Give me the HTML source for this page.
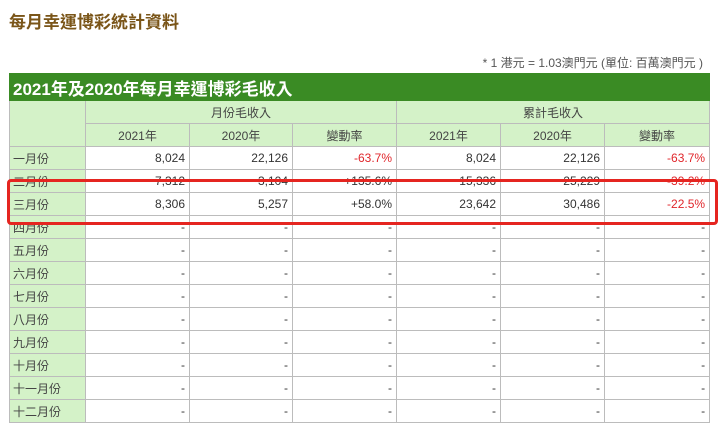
<!DOCTYPE html>
<html><head><meta charset="utf-8"><style>
body{margin:0;width:726px;height:435px;background:#fff;position:relative;overflow:hidden;font-family:"Liberation Sans","Noto Sans CJK TC",sans-serif;}
.t{position:absolute;left:9px;top:8px;font-size:17px;font-weight:bold;color:#7a5518;}
.note{position:absolute;right:23px;top:54px;font-size:12px;color:#555;}
table{position:absolute;left:9px;top:73px;border-collapse:collapse;table-layout:fixed;width:700px;font-size:12px;color:#333;}
td{border:1px solid #bcbcbc;height:22px;padding:0 4px;text-align:right;background:#fff;}
tr.cap td{background:#3a8b24;color:#fff;font-weight:bold;font-size:17px;text-align:left;height:26px;border-color:#3a8b24;padding:0 3px;}
td.h{background:#d4f2c8;text-align:center;color:#444;}
td.l{background:#d4f2c8;text-align:left;padding-left:3px;color:#444;}
.r{color:#e0262b;}
.box{position:absolute;left:7px;top:179px;width:705px;height:40px;border:3px solid #e52520;border-radius:4px;}
</style></head><body>
<div class="t">每月幸運博彩統計資料</div>
<div class="note">* 1 港元 = 1.03澳門元 (單位: 百萬澳門元 )</div>
<table>
<colgroup><col style="width:76px"><col style="width:104px"><col style="width:103px"><col style="width:104px"><col style="width:104px"><col style="width:104px"><col style="width:105px"></colgroup>
<tr class="cap"><td colspan="7">2021年及2020年每月幸運博彩毛收入</td></tr>
<tr><td class="h" rowspan="2"></td><td class="h" colspan="3">月份毛收入</td><td class="h" colspan="3">累計毛收入</td></tr>
<tr><td class="h">2021年</td><td class="h">2020年</td><td class="h">變動率</td><td class="h">2021年</td><td class="h">2020年</td><td class="h">變動率</td></tr>
<tr><td class="l">一月份</td><td>8,024</td><td>22,126</td><td class="r">-63.7%</td><td>8,024</td><td>22,126</td><td class="r">-63.7%</td></tr>
<tr><td class="l">二月份</td><td>7,312</td><td>3,104</td><td>+135.6%</td><td>15,336</td><td>25,229</td><td class="r">-39.2%</td></tr>
<tr><td class="l">三月份</td><td>8,306</td><td>5,257</td><td>+58.0%</td><td>23,642</td><td>30,486</td><td class="r">-22.5%</td></tr>
<tr><td class="l">四月份</td><td>-</td><td>-</td><td>-</td><td>-</td><td>-</td><td>-</td></tr>
<tr><td class="l">五月份</td><td>-</td><td>-</td><td>-</td><td>-</td><td>-</td><td>-</td></tr>
<tr><td class="l">六月份</td><td>-</td><td>-</td><td>-</td><td>-</td><td>-</td><td>-</td></tr>
<tr><td class="l">七月份</td><td>-</td><td>-</td><td>-</td><td>-</td><td>-</td><td>-</td></tr>
<tr><td class="l">八月份</td><td>-</td><td>-</td><td>-</td><td>-</td><td>-</td><td>-</td></tr>
<tr><td class="l">九月份</td><td>-</td><td>-</td><td>-</td><td>-</td><td>-</td><td>-</td></tr>
<tr><td class="l">十月份</td><td>-</td><td>-</td><td>-</td><td>-</td><td>-</td><td>-</td></tr>
<tr><td class="l">十一月份</td><td>-</td><td>-</td><td>-</td><td>-</td><td>-</td><td>-</td></tr>
<tr><td class="l">十二月份</td><td>-</td><td>-</td><td>-</td><td>-</td><td>-</td><td>-</td></tr>
</table>
<div class="box"></div>
</body></html>
